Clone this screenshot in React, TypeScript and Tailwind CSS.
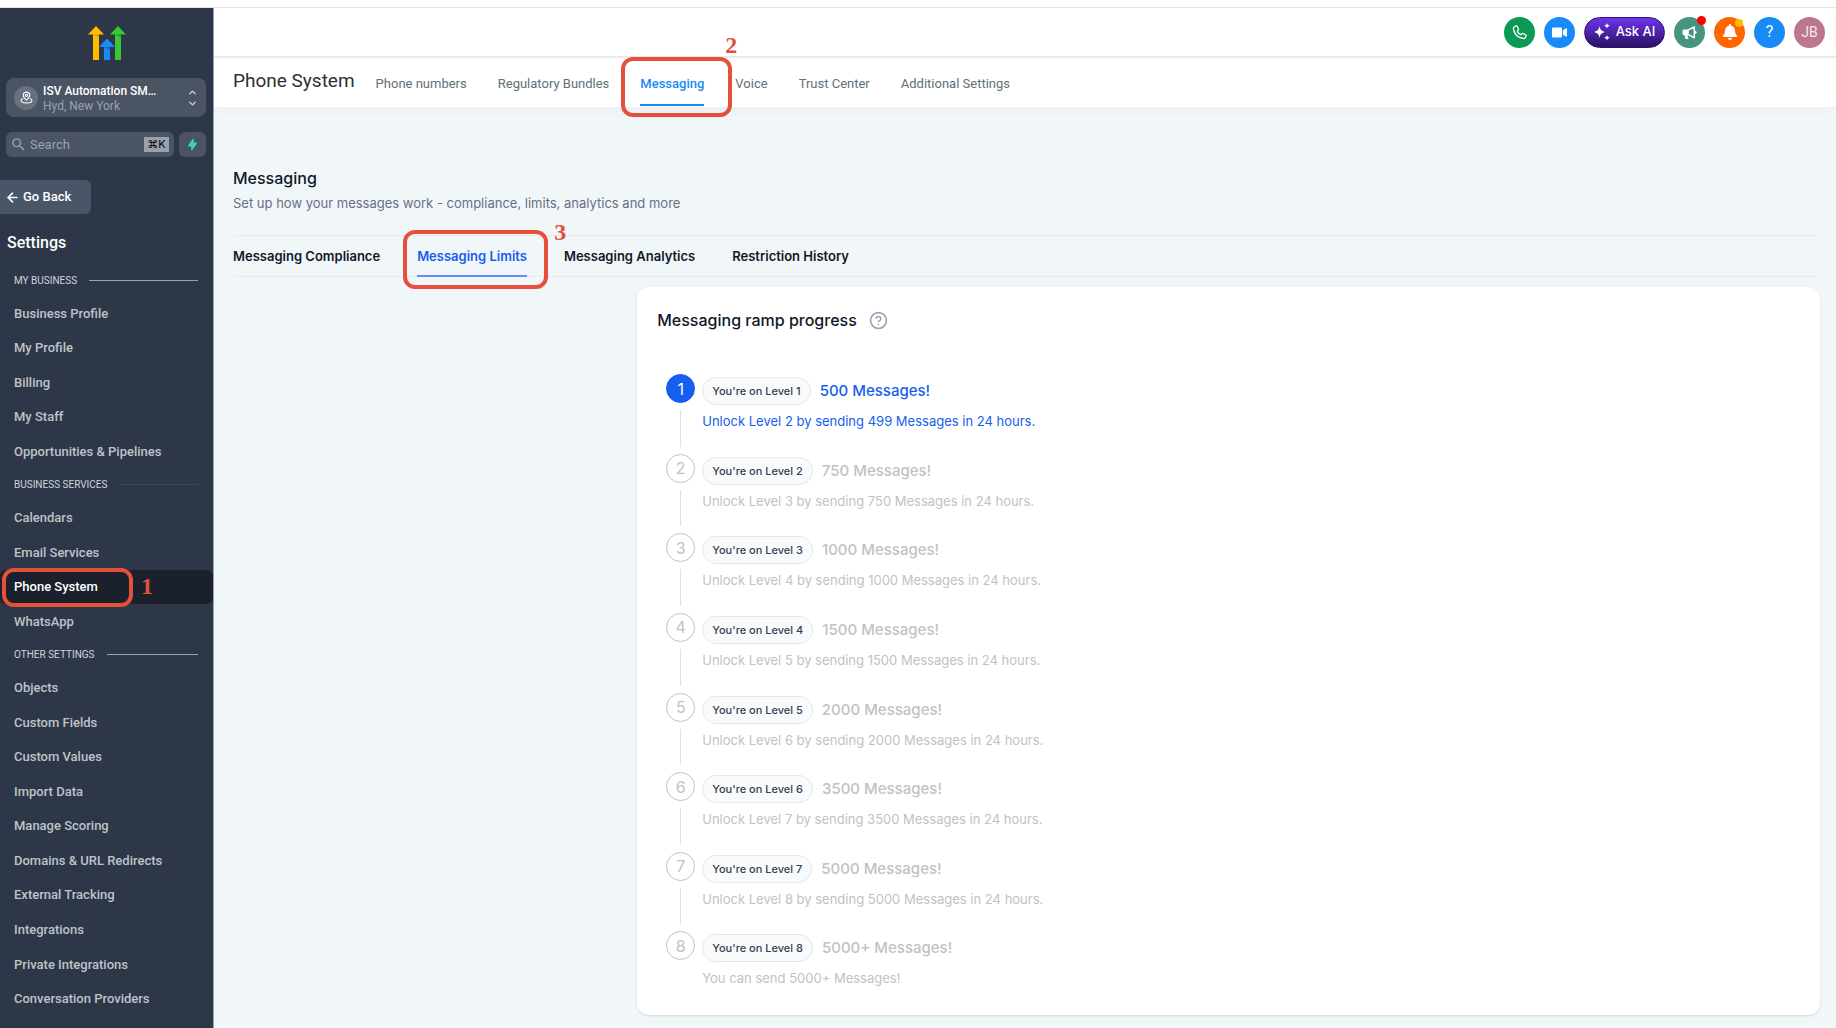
import { Fragment } from "react";
import type { ReactNode } from "react";
import { ArrowLeft, ChevronDown, ChevronUp, CircleHelp } from "lucide-react";
import { FaBell, FaVideo } from "react-icons/fa";
import { HiLightningBolt } from "react-icons/hi";
import { MdSearch } from "react-icons/md";

const menuData = [
  {
    title: "MY BUSINESS",
    line: "bg-gray-400",
    items: ["Business Profile", "My Profile", "Billing", "My Staff", "Opportunities & Pipelines"],
  },
  {
    title: "BUSINESS SERVICES",
    line: "bg-[#3c4657]",
    items: ["Calendars", "Email Services", "Phone System", "WhatsApp"],
  },
  {
    title: "OTHER SETTINGS",
    line: "bg-gray-400",
    items: [
      "Objects",
      "Custom Fields",
      "Custom Values",
      "Import Data",
      "Manage Scoring",
      "Domains & URL Redirects",
      "External Tracking",
      "Integrations",
      "Private Integrations",
      "Conversation Providers",
    ],
  },
];

const phoneTabs = [
  "Phone numbers",
  "Regulatory Bundles",
  "Messaging",
  "Voice",
  "Trust Center",
  "Additional Settings",
];

const messagingTabs = [
  "Messaging Compliance",
  "Messaging Limits",
  "Messaging Analytics",
  "Restriction History",
];

const levels = [
  { amount: "500", text: "Unlock Level 2 by sending 499 Messages in 24 hours." },
  { amount: "750", text: "Unlock Level 3 by sending 750 Messages in 24 hours." },
  { amount: "1000", text: "Unlock Level 4 by sending 1000 Messages in 24 hours." },
  { amount: "1500", text: "Unlock Level 5 by sending 1500 Messages in 24 hours." },
  { amount: "2000", text: "Unlock Level 6 by sending 2000 Messages in 24 hours." },
  { amount: "3500", text: "Unlock Level 7 by sending 3500 Messages in 24 hours." },
  { amount: "5000", text: "Unlock Level 8 by sending 5000 Messages in 24 hours." },
  { amount: "5000+", text: "You can send 5000+ Messages!" },
];

const Logo = () => (
  <svg width="38" height="35" viewBox="0 0 38 35" aria-hidden="true">
    <path d="M0 8.5 8 0l8 8.5z" fill="#ffbc00" />
    <path d="M5 8h6v26H5z" fill="#ffbc00" />
    <path d="M5 8.5h6v3z" fill="#e69500" />
    <path d="M22 8.5 30 0l8 8.5z" fill="#37ca37" />
    <path d="M27 8h6v26h-6z" fill="#37ca37" />
    <path d="M27 8.5h6v3z" fill="#1f9f2a" />
    <path d="M11 21l8-8.5 8 8.5z" fill="#188bf6" />
    <path d="M16 20.5h6V34h-6z" fill="#188bf6" />
    <path d="M16 21h6v3z" fill="#0d6ccb" />
  </svg>
);

const LocationIcon = () => (
  <svg width="13" height="13" viewBox="0 0 24 24" fill="none" stroke="currentColor" strokeWidth="2" strokeLinecap="round" strokeLinejoin="round" aria-hidden="true">
    <path d="M5 14.3c-1.9.8-3 2-3 3.2C2 20 6.5 22 12 22s10-2 10-4.5c0-1.2-1.1-2.4-3-3.2" />
    <path d="M12 17c3.5-3.2 6-5.8 6-9A6 6 0 0 0 6 8c0 3.2 2.5 5.8 6 9z" />
    <circle cx="12" cy="8" r="2" />
  </svg>
);

const PhoneIcon = () => (
  <svg width="15" height="15" viewBox="0 0 14 14" fill="none" stroke="currentColor" strokeWidth="1.2" strokeLinejoin="round" aria-hidden="true">
    <path d="M2.2 1.6 3.7.9c.5-.2 1 0 1.2.4L6 3.8c.2.4.1.8-.2 1.1l-.9 1c.6 1.5 1.7 2.6 3.2 3.2l1-.9c.3-.3.7-.4 1.1-.2l2.5 1.1c.4.2.6.7.4 1.2l-.7 1.500c-.3.6-.9.9-1.500.8C5.600 12 2 8.400 1.300 3.100c-.1-.6.3-1.200.9-1.500z" />
  </svg>
);

const SparkleIcon = () => (
  <svg width="16" height="18" viewBox="0 0 16 18" fill="#fff" aria-hidden="true">
    <path d="M5.5 3c.7 3.8 1.700 4.800 5.500 6-3.800 1.200-4.800 2.200-5.500 6C4.800 11.200 3.800 10.200 0 9c3.800-1.200 4.800-2.200 5.500-6z" />
    <path d="M13 0c.4 1.800.9 2.200 3 2.800-2.100.6-2.600 1-3 2.800-.4-1.800-.9-2.200-3-2.800 2.100-.6 2.600-1 3-2.800z" />
    <path d="M13 12c.4 1.800.9 2.200 3 2.800-2.100.6-2.600 1-3 2.800-.4-1.800-.9-2.200-3-2.800 2.100-.6 2.600-1 3-2.800z" />
  </svg>
);

const MegaphoneIcon = () => (
  <svg width="15" height="15" viewBox="0 0 15 15" aria-hidden="true">
    <path d="M1.5 4.5H6V10h-.5l1 4h-3l-1-4h-1a1 1 0 0 1-1-1V5.500a1 1 0 0 1 1-1z" fill="#fff" />
    <path d="M6 5.200 12.300 1.800v11L6 9.400z" fill="none" stroke="#fff" strokeWidth="1.5" strokeLinejoin="round" />
    <path d="M13 5.800a1.500 1.500 0 0 1 0 3z" fill="#fff" />
  </svg>
);

// numbered red frame that points at one step of the walkthrough
const Mark = ({ n, box, label }: { n: number; box: string; label: string }) => (
  <>
    <span className={`absolute z-10 pointer-events-none rounded-xl border-4 border-[#e5503b] ${box}`} />
    <span className={`absolute z-10 pointer-events-none font-['Liberation_Serif',serif] text-2xl leading-6 font-bold text-[#e5503b] ${label}`}>
      {n}
    </span>
  </>
);

const RoundButton = ({ label, color, children }: { label: string; color: string; children: ReactNode }) => (
  <button type="button" aria-label={label} className={`relative flex size-[31px] items-center justify-center rounded-full text-white ${color}`}>
    {children}
  </button>
);

const Sidebar = () => (
  <aside className="flex w-[214px] shrink-0 flex-col border-r border-gray-400 bg-[#2d3748] pb-3">
    <div className="flex justify-center pt-[18px]">
      <Logo />
    </div>
    <div className="mt-[17px] pr-[7px] pl-1.5">
      <button type="button" className="flex h-[39px] w-full items-center rounded-lg bg-[#4a5463] px-2 text-left">
        <span className="flex size-6 items-center justify-center rounded-full bg-[#687180] text-white">
          <LocationIcon />
        </span>
        <span className="ml-[5px] flex-1 pt-0.5">
          <span className="block text-xs leading-[15px] font-medium text-white">ISV Automation SM…</span>
          <span className="block text-xs leading-[15px] text-gray-400">Hyd, New York</span>
        </span>
        <span className="flex flex-col text-gray-300">
          <ChevronUp size={11} strokeWidth={3} />
          <ChevronDown size={11} strokeWidth={3} />
        </span>
      </button>
      <div className="mt-[15px] flex gap-[5px]">
        <label className="flex h-[25px] min-w-0 flex-1 items-center rounded-md bg-[#4a5463] pr-[5px] pl-1 text-gray-400">
          <MdSearch size={17} className="shrink-0" />
          <input type="text" aria-label="Search" placeholder="Search" className="ml-[3px] w-full min-w-0 text-[13px] outline-none placeholder:text-gray-400" />
          <kbd className="flex h-[15px] w-[25px] shrink-0 items-center justify-center bg-gray-400 font-['Inter','DejaVu_Sans',sans-serif] text-[11px] text-black">⌘K</kbd>
        </label>
        <button type="button" aria-label="Quick actions" className="flex h-[25px] w-[27px] items-center justify-center rounded-md bg-[#4a5463] text-[#38d9a0]">
          <HiLightningBolt size={13} />
        </button>
      </div>
    </div>
    <button type="button" className="mt-[23px] flex h-[34px] w-[91px] items-center gap-[3px] rounded-r-md bg-[#4a5568] pl-[5px] text-[13px] font-medium text-white">
      <ArrowLeft size={15} strokeWidth={2.5} />
      Go Back
    </button>
    <h1 className="mt-[17px] pl-[7px] text-base leading-6 font-medium text-white">Settings</h1>
    <nav className="mt-[9px] flex flex-1 flex-col">
      {menuData.map((group) => (
        <Fragment key={group.title}>
          <div className="flex h-8 shrink-0 items-center gap-3 pr-[15px] pl-3.5">
            <span className="text-[10px] text-gray-300">{group.title}</span>
            <span className={`h-px flex-1 ${group.line}`} />
          </div>
          {group.items.map((item) => (
            <a
              key={item}
              href="#"
              className={`relative flex min-h-7 flex-1 items-center rounded-md pl-3.5 text-[13px] font-medium ${item === "Phone System" ? "bg-[#1a202c] text-white" : "text-[#bfc3c9]"}`}
            >
              {item}
              {item === "Phone System" && <Mark n={1} box="left-0.5 -top-0.5 h-[39px] w-[131px]" label="left-[141px] top-1" />}
            </a>
          ))}
        </Fragment>
      ))}
    </nav>
  </aside>
);

const TopBar = () => (
  <header className="flex h-[50px] items-center justify-end gap-[9px] border-b-2 border-[#ebebeb] bg-white pr-[11px]">
    <RoundButton label="Call" color="bg-[#0a9a55]">
      <PhoneIcon />
    </RoundButton>
    <RoundButton label="Video" color="bg-[#188bf6]">
      <FaVideo size={15} />
    </RoundButton>
    <button type="button" className="flex h-[31px] w-[81px] items-center justify-center gap-1.5 rounded-full border border-[#2f1379] bg-linear-to-b from-[#6d35ee] to-[#2c1163] font-['Inter',sans-serif] text-[13px] font-medium text-white">
      <SparkleIcon />
      Ask AI
    </button>
    <RoundButton label="Announcements" color="bg-[#48957f]">
      <MegaphoneIcon />
      <span className="absolute -top-px -right-px size-[9px] rounded-full bg-[#ff0000]" />
    </RoundButton>
    <RoundButton label="Notifications" color="bg-[#ff6600]">
      <FaBell size={16} />
      <span className="absolute top-0.5 right-0.5 size-2 rounded-full bg-[#ffbc00]" />
    </RoundButton>
    <RoundButton label="Help" color="bg-[#188bf6]">
      <span className="text-base">?</span>
    </RoundButton>
    <RoundButton label="Account" color="bg-[#be7690]">
      <span className="text-sm text-[#f5e6ec]">JB</span>
    </RoundButton>
  </header>
);

const PhoneTabs = () => (
  <div className="flex h-[49px] items-stretch bg-white pl-[19px] shadow-[0_4px_12px_rgba(0,0,0,0.03)]">
    <h2 className="mt-[7px] mr-[21px] text-[19px] leading-8 text-[#2a3135]">Phone System</h2>
    <nav className="flex gap-[31px]">
      {phoneTabs.map((tab) => (
        <a
          key={tab}
          href="#"
          className={`relative mb-px flex items-end border-b-2 pb-2.5 text-[13px] leading-5 ${tab === "Messaging" ? "border-[#188bf6] font-medium text-[#188bf6]" : "border-transparent text-[#607179]"}`}
        >
          {tab}
          {tab === "Messaging" && <Mark n={2} box="-left-[19px] -top-px h-[60px] w-[111px]" label="left-[85px] -top-[25px]" />}
        </a>
      ))}
    </nav>
  </div>
);

const Level = ({ index, amount, text }: { index: number; amount: string; text: string }) => {
  const active = index === 0;
  return (
    <li className="flex gap-[7px]">
      <div className="flex w-[29px] flex-col items-center">
        <span className={`flex size-[29px] shrink-0 items-center justify-center rounded-full border text-base ${active ? "border-[#155eef] bg-[#155eef] text-white" : "border-[#c2c2c2] text-[#c2c2c2]"}`}>
          {index + 1}
        </span>
        {index < levels.length - 1 && <span className="my-[7px] w-px flex-1 bg-[#e0e0e6]" />}
      </div>
      <div className="pt-[3px]">
        <div className="flex items-center gap-[9px]">
          <span className="rounded-full border border-gray-200 bg-[#f9fafb] px-[9px] py-[5px] text-[11px] leading-4 font-medium text-[#344054]">
            You're on Level {index + 1}
          </span>
          <span className={`text-[15px] leading-6 font-medium ${active ? "text-[#155eef]" : "text-[#c2c2c2]"}`}>{amount} Messages!</span>
        </div>
        <p className={`mt-1.5 text-[13px] leading-5 ${active ? "text-[#155eef]" : "text-[#c2c2c2]"}`}>{text}</p>
      </div>
    </li>
  );
};

const App = () => {
  return (
    <div className="flex min-h-screen flex-col bg-white font-['Roboto',sans-serif]">
      <div className="h-2 shrink-0 border-b border-[#e4e4e4]" />
      <div className="flex flex-1">
        <Sidebar />
        <div className="flex min-w-0 flex-1 flex-col bg-[#f1f6f9]">
          <TopBar />
          <PhoneTabs />
          <main className="flex flex-1 flex-col pt-[59px] pr-4 pb-[13px] pl-[19px] font-['Inter',sans-serif]">
            <h3 className="text-base leading-6 font-medium text-[#101828]">Messaging</h3>
            <p className="mt-[3px] text-[13px] leading-5 text-[#667085]">Set up how your messages work - compliance, limits, analytics and more</p>
            <nav className="mt-[22px] flex h-[42px] gap-[37px] border-y border-[#e8ebee]">
              {messagingTabs.map((tab) => (
                <a
                  key={tab}
                  href="#"
                  className={`relative -mb-px flex items-center border-b-2 pt-0.5 text-[13px] font-semibold ${tab === "Messaging Limits" ? "border-[#5c8df0] text-[#155eef]" : "border-transparent text-[#101828]"}`}
                >
                  {tab}
                  {tab === "Messaging Limits" && <Mark n={3} box="-left-3.5 -top-1.5 h-[59px] w-[145px]" label="left-[137px] -top-4" />}
                </a>
              ))}
            </nav>
            <div className="mt-2.5 grid flex-1 grid-cols-[1fr_3fr] gap-2.5">
              <section className="col-start-2 flex flex-col rounded-xl bg-white px-5 pt-[21px] pb-1 shadow-sm">
                <div className="flex items-center gap-3">
                  <h4 className="text-base leading-6 font-medium text-[#101828]">Messaging ramp progress</h4>
                  <CircleHelp size={19} strokeWidth={2} className="text-[#98a2b3]" />
                </div>
                <ol className="mt-[42px] grid flex-1 auto-rows-fr pl-[9px]">
                  {levels.map((level, i) => (
                    <Level key={level.amount} index={i} amount={level.amount} text={level.text} />
                  ))}
                </ol>
              </section>
            </div>
          </main>
        </div>
      </div>
    </div>
  );
};

export default App;
